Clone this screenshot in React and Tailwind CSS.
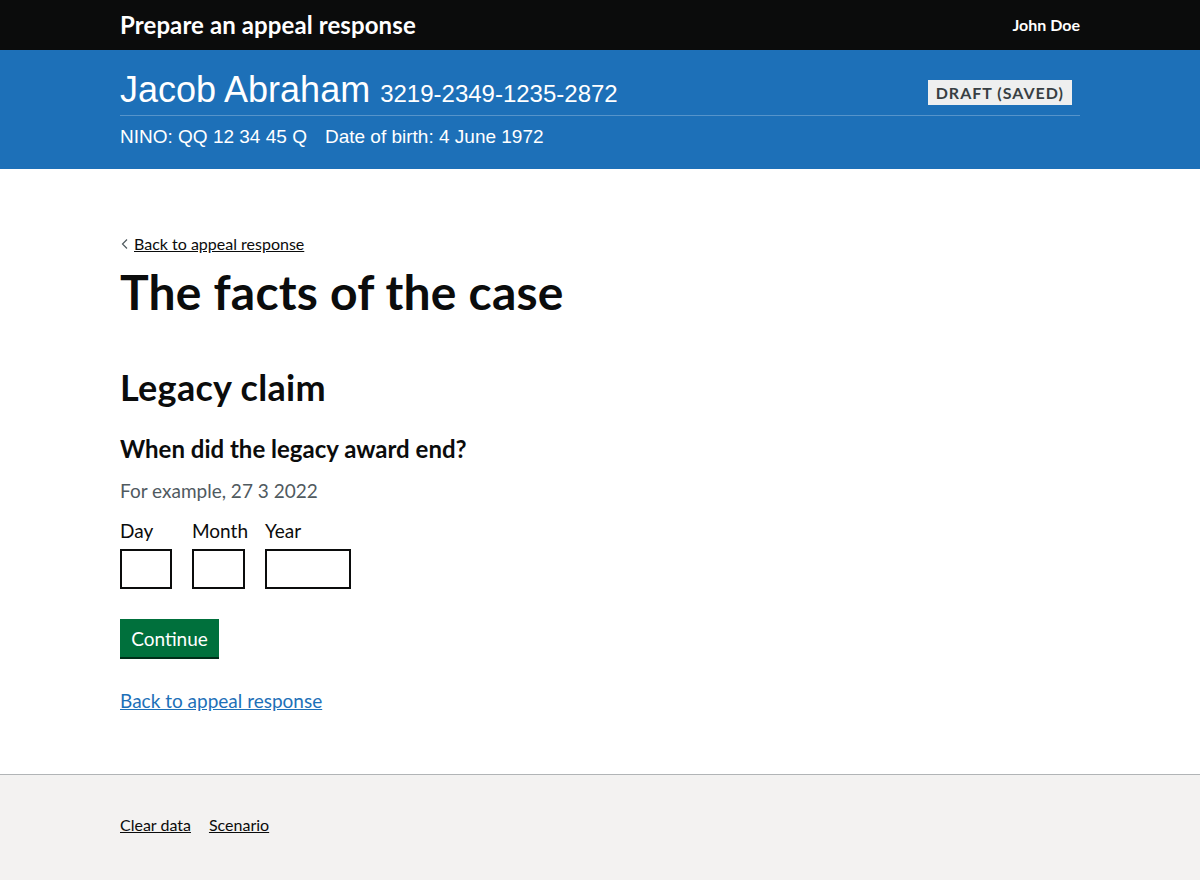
import React from "react";

const gds = { fontFamily: 'Lato, "Noto Sans", Arial, sans-serif' };
const arial = { fontFamily: '"Liberation Sans", Arial, sans-serif' };

export default function App() {
  return (
    <div className="min-h-[880px] flex flex-col bg-white text-[#0b0c0c]" style={gds}>
      <header className="bg-[#0b0c0c] h-[50px]">
        <div className="mx-[120px] h-full flex items-center justify-between">
          <span className="text-white font-bold text-[24px] leading-none tracking-[0.1px]">Prepare an appeal response</span>
          <span className="text-white font-bold text-[16px] leading-none">John Doe</span>
        </div>
      </header>
      <div className="bg-[#1d70b8] h-[119px]" style={arial}>
        <div className="mx-[120px] pt-[20px]">
          <div className="flex items-start justify-between border-b border-[#5694ca] h-[46px]">
            <div className="text-white flex items-baseline">
              <span className="text-[36px] leading-[40px]">Jacob Abraham</span>
              <span className="text-[24px] leading-[40px] ml-[10px]">3219-2349-1235-2872</span>
            </div>
            <span className="mt-[10px] mr-[8px] bg-[#eeefef] text-[#383f43] font-bold text-[16px] uppercase tracking-[1px] px-[8px] h-[25px] flex items-center" style={gds}>Draft (saved)</span>
          </div>
          <div className="text-white text-[19px] leading-[24px] mt-[9px] flex gap-[18px]">
            <span>NINO: QQ 12 34 45 Q</span>
            <span>Date of birth: 4 June 1972</span>
          </div>
        </div>
      </div>
      <main className="flex-1 mx-[120px] pt-[63px] pb-[60px]">
        <a href="#" className="inline-flex items-center text-[16px] leading-[20px] underline text-[#0b0c0c]">
          <svg width="10" height="12" viewBox="0 0 10 12" className="mr-[4px]"><path d="M7 1.5 L2.5 6 L7 10.5" fill="none" stroke="#505a5f" strokeWidth="1.2" /></svg>
          Back to appeal response
        </a>
        <h1 className="font-bold text-[48px] leading-[50px] mt-[11px] tracking-[0.2px]">The facts of the case</h1>
        <h2 className="font-bold text-[36px] leading-[40px] mt-[50px] tracking-[0.3px]">Legacy claim</h2>
        <h3 className="font-bold text-[24px] leading-[30px] mt-[27px]">When did the legacy award end?</h3>
        <p className="text-[19px] leading-[25px] text-[#505a5f] mt-[14px]">For example, 27 3 2022</p>
        <div className="flex gap-[20px] mt-[15px]">
          <div className="flex flex-col w-[52px]">
            <label className="text-[19px] leading-[25px] mb-[6px] whitespace-nowrap">Day</label>
            <input className="w-[52px] h-[40px] border-2 border-[#0b0c0c] outline-none" />
          </div>
          <div className="flex flex-col w-[53px]">
            <label className="text-[19px] leading-[25px] mb-[6px] whitespace-nowrap">Month</label>
            <input className="w-[53px] h-[40px] border-2 border-[#0b0c0c] outline-none" />
          </div>
          <div className="flex flex-col w-[86px]">
            <label className="text-[19px] leading-[25px] mb-[6px] whitespace-nowrap">Year</label>
            <input className="w-[86px] h-[40px] border-2 border-[#0b0c0c] outline-none" />
          </div>
        </div>
        <button className="mt-[30px] bg-[#00703c] text-white text-[19px] leading-[25px] shadow-[0_2px_0_#002d18] w-[99px] h-[38px] flex items-center justify-center">Continue</button>
        <a href="#" className="block mt-[31px] text-[19px] leading-[25px] text-[#1d70b8] underline">Back to appeal response</a>
      </main>
      <footer className="bg-[#f3f2f1] border-t border-[#b1b4b6] h-[106px]">
        <div className="mx-[120px] pt-[40px] flex gap-[18px] text-[16px] leading-[20px]">
          <a href="#" className="underline text-[#0b0c0c]">Clear data</a>
          <a href="#" className="underline text-[#0b0c0c]">Scenario</a>
        </div>
      </footer>
    </div>
  );
}
